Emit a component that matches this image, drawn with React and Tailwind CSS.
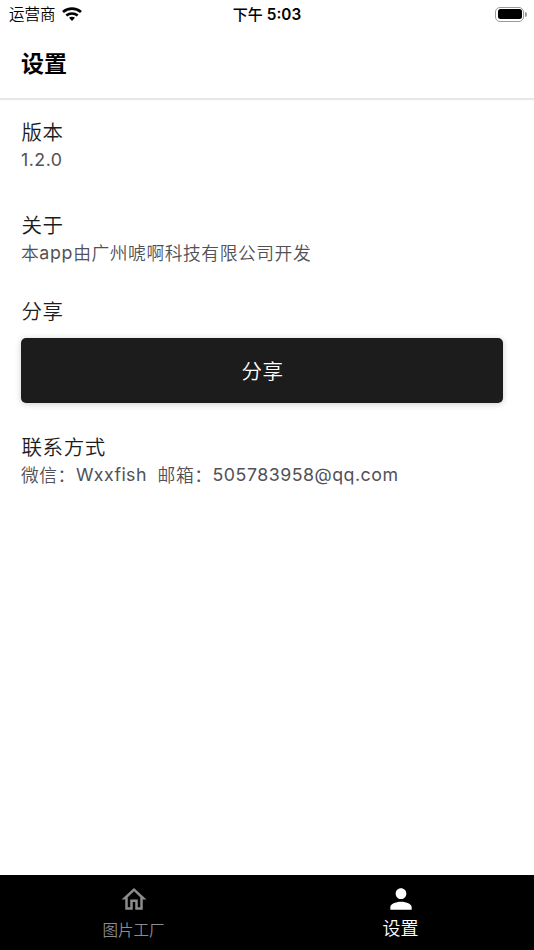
import React from "react";
import { MdOutlineHome, MdPerson } from "react-icons/md";

function WifiIcon() {
  return (
    <svg className="-mt-[2px] h-[14px] w-[20px]" viewBox="0 0 20 14" fill="none" stroke="#000" strokeWidth="2.7">
      <path d="M1 4.9C6.1.5 13.9.5 19 4.9" />
      <path d="M4.3 8.5c3.3-2.7 8.1-2.7 11.4 0" />
      <path d="M7 10.8c1.8-1.3 4.2-1.3 6 0L10 14z" fill="#000" stroke="none" />
    </svg>
  );
}

function StatusBar() {
  return (
    <div className="grid h-7 grid-cols-3 items-center text-black">
      <div className="flex items-center gap-[6px] pl-[9px]">
        <span className="mt-[1px] text-[15.5px] leading-7 font-[350]">运营商</span>
        <WifiIcon />
      </div>
      <div className="flex items-center justify-center gap-[4px] leading-7">
        <span className="text-[15px] font-medium">下午</span>
        <span className="text-[15.3px] font-semibold">5:03</span>
      </div>
      <div className="flex items-center justify-end gap-[1px] pr-[7px] pb-[1px]">
        <div className="h-[15px] w-[29px] rounded-[5px] border border-[#9a9a9a] p-[1.5px]">
          <div className="h-full w-full rounded-[2.5px] bg-black" />
        </div>
        <div className="h-[5px] w-[2px] rounded-r-full bg-[#9a9a9a]" />
      </div>
    </div>
  );
}

function Section({ title, children, className }) {
  return (
    <section className={className}>
      <h2 className="h-[30px] pl-[0.5px] text-[20.5px] leading-[32px] font-[350] tracking-[0.6px] whitespace-nowrap text-[#1c1c1e]">{title}</h2>
      {children}
    </section>
  );
}

function Detail({ children }) {
  return (
    <p className="flex h-[26px] text-[17.8px] leading-[26px] font-[390] tracking-[0.5px] whitespace-pre text-[#525157]">{children}</p>
  );
}

function Han({ children }) {
  return <span className="pt-[1px] font-[350] tracking-[0.53px]">{children}</span>;
}

export default function App() {
  return (
    <div className="flex h-[950px] w-[534px] flex-col overflow-hidden bg-white font-['Inter','Noto_Sans_CJK_SC',sans-serif]">
      <header className="h-[98px] shrink-0 shadow-[0_2px_1px_rgba(0,0,0,0.09)]">
        <StatusBar />
        <h1 className="mt-[18px] pl-[21px] text-[23px] leading-[36px] font-bold text-black">设置</h1>
      </header>
      <main className="flex-1 pl-[21px]">
        <Section title="版本" className="mt-[19px] h-[93px]">
          <Detail>1.2.0</Detail>
        </Section>
        <Section title="关于" className="h-[86px]">
          <Detail>
            <Han>本</Han>
            <span className="tracking-[0.7px]">app</span>
            <Han>由广州唬啊科技有限公司开发</Han>
          </Detail>
        </Section>
        <Section title="分享" className="h-[136px]">
          <button className="mt-[12px] block h-[65px] w-[482px] rounded-[5px] bg-[#1c1c1c] pt-[3px] pl-[1px] text-[20.5px] font-[350] tracking-[0.6px] text-white shadow-[0_1px_6px_rgba(0,0,0,0.2)]">
            分享
          </button>
        </Section>
        <Section title="联系方式">
          <Detail>
            <Han>微信：</Han>
            <span className="tracking-[0.4px]">Wxxfish  </span>
            <Han>邮箱：</Han>
            <span>505783958@qq.com</span>
          </Detail>
        </Section>
      </main>
      <nav className="grid h-[75px] shrink-0 grid-cols-2 bg-black">
        <div className="flex flex-col items-center pt-[9px] text-[#8c8c8c]">
          <MdOutlineHome className="h-[31px] w-[30px]" preserveAspectRatio="none" />
          <span className="mt-[4px] text-[15.5px] leading-[24px] font-[350]">图片工厂</span>
        </div>
        <div className="flex flex-col items-center pt-[8px] text-white">
          <MdPerson className="size-[32px]" />
          <span className="mt-[1px] text-[18px] leading-[26px] font-[350]">设置</span>
        </div>
      </nav>
    </div>
  );
}
